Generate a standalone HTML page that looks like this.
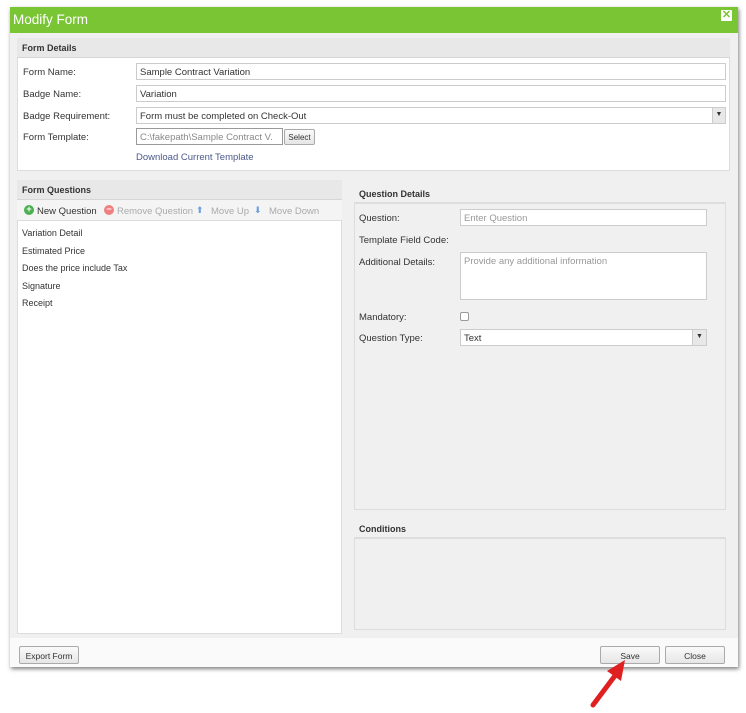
<!DOCTYPE html><html><head><style>
*{box-sizing:border-box;margin:0;padding:0}
body{width:746px;height:713px;background:#fff;font-family:"Liberation Sans",sans-serif;font-size:9.5px;color:#333;position:relative;overflow:hidden}
.a{position:absolute}
.dlg{left:10px;top:7px;width:728px;height:660px;background:#f0f0f0;box-shadow:1px 2px 4px rgba(0,0,0,.5)}
.title{left:10px;top:7px;width:728px;height:26px;background:#7ac534;color:#fff;font-size:13.5px;padding:5px 0 0 3px}
.hdr{font-weight:bold;font-size:9px;color:#333}
.inp{background:#fff;border:1px solid #ccc;height:17px;padding:3px 3px 0;font-size:9.5px;color:#333}
.btn{background:linear-gradient(#fafafa,#e6e6e6);border:1px solid #aaa;border-radius:2px;font-size:8.5px;text-align:center;padding-top:4px;color:#333}
</style></head><body>
<div class="a dlg"></div>
<div class="a title">Modify Form</div>
<div class="a" style="left:721px;top:10px;width:11px;height:11px;background:#fff;border-radius:1px;color:#7ac534;font-size:11px;line-height:11px;text-align:center;font-weight:bold">✕</div>

<div class="a" style="left:17px;top:38px;width:713px;height:133px;background:#fff;border:1px solid #ddd"></div>
<div class="a hdr" style="left:17px;top:38px;width:713px;height:20px;background:#e8e8e8;border-bottom:1px solid #d6d6d6;padding:5px 0 0 5px">Form Details</div>
<div class="a" style="left:23px;top:67px">Form Name:</div>
<div class="a" style="left:23px;top:89px">Badge Name:</div>
<div class="a" style="left:23px;top:111px">Badge Requirement:</div>
<div class="a" style="left:23px;top:132px">Form Template:</div>
<div class="a inp" style="left:136px;top:63px;width:590px">Sample Contract Variation</div>
<div class="a inp" style="left:136px;top:85px;width:590px">Variation</div>
<div class="a inp" style="left:136px;top:107px;width:590px">Form must be completed on Check-Out</div>
<div class="a" style="left:712px;top:108px;width:13px;height:15px;background:#e8e8e8;border-left:1px solid #ccc;font-size:7px;text-align:center;padding-top:3px">▼</div>
<div class="a inp" style="left:136px;top:128px;width:147px;color:#888;border-color:#999;overflow:hidden;white-space:nowrap">C:\fakepath\Sample Contract V.</div>
<div class="a btn" style="left:284px;top:129px;width:31px;height:16px;font-size:8px;padding-top:3px">Select</div>
<div class="a" style="left:136px;top:152px;color:#4a5a8a">Download Current Template</div>

<div class="a" style="left:17px;top:180px;width:325px;height:454px;background:#fff;border:1px solid #ddd"></div>
<div class="a hdr" style="left:17px;top:180px;width:325px;height:20px;background:#e8e8e8;border-bottom:1px solid #d6d6d6;padding:5px 0 0 5px">Form Questions</div>
<div class="a" style="left:17px;top:200px;width:325px;height:21px;background:#f4f4f4;border-bottom:1px solid #ddd"></div>
<div class="a" style="left:24px;top:205px;width:10px;height:10px;border-radius:50%;background:#4caf50;color:#fff;font-size:9px;line-height:9px;text-align:center;font-weight:bold">+</div>
<div class="a" style="left:37px;top:206px">New Question</div>
<div class="a" style="left:104px;top:205px;width:10px;height:10px;border-radius:50%;background:#f08080;color:#fff;font-size:9px;line-height:9px;text-align:center;font-weight:bold">−</div>
<div class="a" style="left:117px;top:206px;color:#aaa">Remove Question</div>
<div class="a" style="left:196px;top:205px;color:#6a9ee0;font-size:9px">⬆</div>
<div class="a" style="left:211px;top:206px;color:#aaa">Move Up</div>
<div class="a" style="left:254px;top:205px;color:#6a9ee0;font-size:9px">⬇</div>
<div class="a" style="left:269px;top:206px;color:#aaa">Move Down</div>
<div class="a" style="left:22px;top:225px;line-height:17.5px;font-size:9px">Variation Detail<br>Estimated Price<br>Does the price include Tax<br>Signature<br>Receipt</div>

<div class="a hdr" style="left:359px;top:189px">Question Details</div>
<div class="a" style="left:354px;top:202px;width:372px;height:308px;border:1px solid #ddd;border-top:2px solid #ddd"></div>
<div class="a" style="left:359px;top:213px">Question:</div>
<div class="a" style="left:359px;top:235px">Template Field Code:</div>
<div class="a" style="left:359px;top:257px">Additional Details:</div>
<div class="a" style="left:359px;top:312px">Mandatory:</div>
<div class="a" style="left:359px;top:333px">Question Type:</div>
<div class="a inp" style="left:460px;top:209px;width:247px;color:#999">Enter Question</div>
<div class="a inp" style="left:460px;top:252px;width:247px;height:48px;color:#999">Provide any additional information</div>
<div class="a" style="left:460px;top:312px;width:9px;height:9px;border:1px solid #999;border-radius:2px;background:#fff"></div>
<div class="a inp" style="left:460px;top:329px;width:247px">Text</div>
<div class="a" style="left:692px;top:330px;width:14px;height:15px;background:#e8e8e8;border-left:1px solid #ccc;font-size:7px;text-align:center;padding-top:3px">▼</div>

<div class="a hdr" style="left:359px;top:524px">Conditions</div>
<div class="a" style="left:354px;top:537px;width:372px;height:93px;border:1px solid #ddd;border-top:2px solid #ddd"></div>

<div class="a" style="left:10px;top:638px;width:728px;height:29px;background:#fafafa"></div>
<div class="a btn" style="left:19px;top:646px;width:60px;height:18px">Export Form</div>
<div class="a btn" style="left:600px;top:646px;width:60px;height:18px">Save</div>
<div class="a btn" style="left:665px;top:646px;width:60px;height:18px">Close</div>

<svg class="a" style="left:585px;top:655px" width="50" height="55"><line x1="8" y1="50" x2="32" y2="18" stroke="#e02020" stroke-width="5" stroke-linecap="round"/><polygon points="40,5 22,16 36,26" fill="#e02020"/></svg>
</body></html>
